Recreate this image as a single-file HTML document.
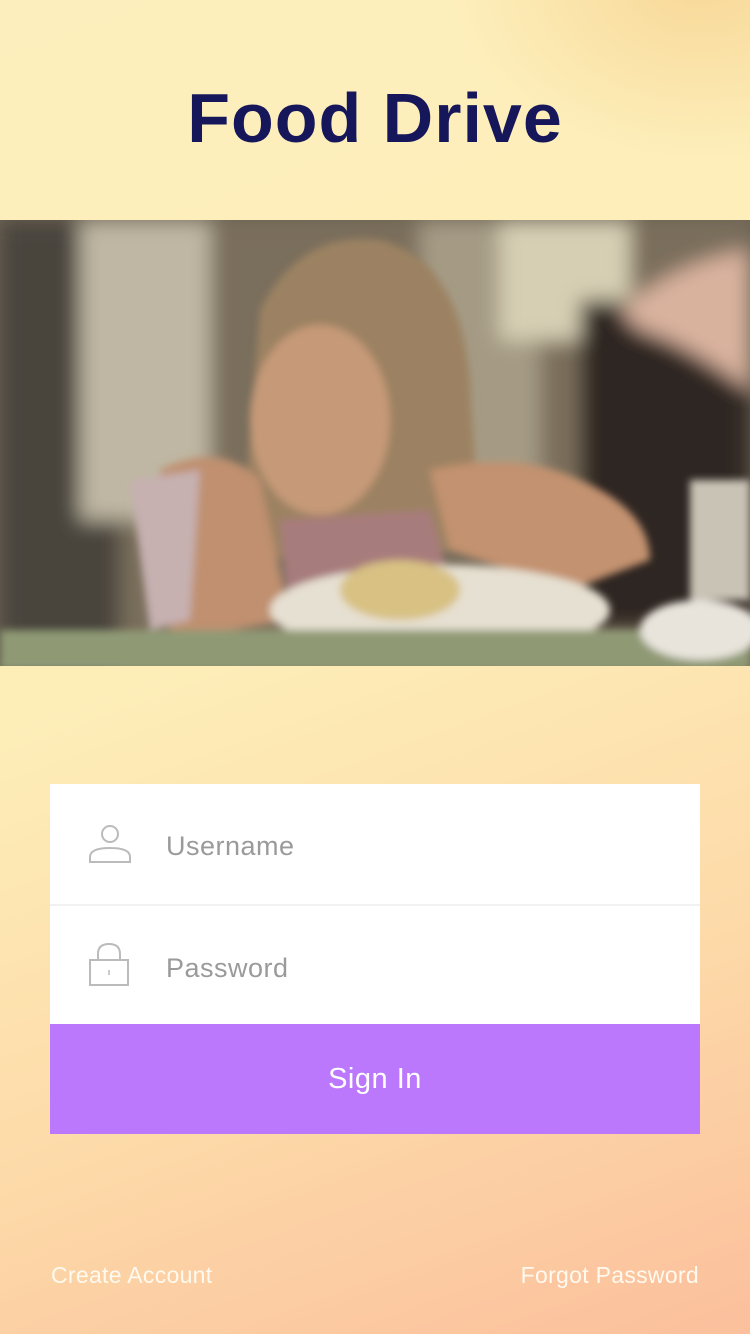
<!DOCTYPE html>
<html><head><meta charset="utf-8"><style>
html,body{margin:0;padding:0}
body{width:750px;height:1334px;position:relative;overflow:hidden;font-family:"Liberation Sans",sans-serif;
background:linear-gradient(160deg,#fdefbd 0%,#fdeeb8 45%,#fdd9a8 75%,#fbbf9c 100%);}
.glow{position:absolute;right:-200px;top:-200px;width:500px;height:360px;border-radius:50%;background:radial-gradient(closest-side,rgba(246,208,140,.75),rgba(246,208,140,0));}
h1{position:absolute;top:78px;left:0;width:750px;margin:0;text-align:center;font-size:70px;font-weight:bold;color:#15175a;letter-spacing:1px}
.photo{position:absolute;left:0;top:220px;width:750px;height:446px;overflow:hidden;background:#6e6455}
.panel{position:absolute;left:50px;top:784px;width:650px;height:240px;background:#fff}
.row{height:120px;position:relative}
.row+.row{border-top:2px solid #f1f1f1;height:118px}
.row span{position:absolute;left:116px;top:47px;font-size:27px;color:#9a9a9a;letter-spacing:.5px}
.row svg{position:absolute;left:38px}
.btn{position:absolute;left:50px;top:1024px;width:650px;height:110px;background:#bb78fd;color:#fff;font-size:29px;text-align:center;line-height:110px;letter-spacing:.5px}
.l{position:absolute;top:1262px;font-size:23px;color:#fffaf0;letter-spacing:.3px}
</style></head><body>
<div class="glow"></div>
<h1>Food Drive</h1>
<div class="photo">
<svg width="750" height="446" viewBox="0 0 750 446">
<defs><filter id="b"><feGaussianBlur stdDeviation="10"/></filter><filter id="s"><feGaussianBlur stdDeviation="4"/></filter></defs>
<g filter="url(#b)">
<rect width="750" height="446" fill="#7a6e5c"/>
<rect x="0" y="0" width="120" height="446" fill="#4a443c"/>
<rect x="80" y="0" width="130" height="300" fill="#bfb7a3"/>
<rect x="420" y="0" width="120" height="260" fill="#a59b85"/>
<rect x="500" y="0" width="130" height="120" fill="#d7cfb4"/>
<rect x="580" y="80" width="170" height="330" fill="#2e2822"/>
<path d="M620 90 Q680 40 750 30 L750 170 Q680 120 640 110Z" fill="#d9b29e"/>
</g>
<g filter="url(#s)">
<path d="M260 90 Q300 10 380 20 Q460 40 470 160 L480 330 L240 340 Z" fill="#9c8262"/>
<ellipse cx="320" cy="200" rx="70" ry="95" fill="#c69a78"/>
<path d="M160 250 Q220 220 260 260 L290 400 L170 420 Z" fill="#c09070"/>
<path d="M130 260 L200 250 L190 400 L150 410Z" fill="#c6b0b0"/>
<path d="M280 300 L430 290 L460 400 L290 410Z" fill="#a77b7c"/>
<path d="M430 250 Q520 230 580 260 Q650 290 650 340 L570 370 L450 330Z" fill="#c3926f"/>
<rect x="690" y="260" width="60" height="120" fill="#c9c3b5"/>
<ellipse cx="440" cy="390" rx="170" ry="45" fill="#e6e0d2"/>
<ellipse cx="400" cy="370" rx="60" ry="30" fill="#d8c183"/>
<rect x="0" y="410" width="750" height="40" fill="#8f9a75"/>
<ellipse cx="700" cy="410" rx="60" ry="30" fill="#e8e4dc"/>
</g>
</svg>
</div>
<div class="panel">
<div class="row">
<svg style="top:40px" width="44" height="40" viewBox="0 0 44 40"><circle cx="22" cy="10" r="8" fill="none" stroke="#bbb" stroke-width="2"/><path d="M2 38 L2 33 Q2 24 22 24 Q42 24 42 33 L42 38 Z" fill="none" stroke="#bbb" stroke-width="2"/></svg>
<span>Username</span></div>
<div class="row">
<svg style="top:36px" width="42" height="46" viewBox="0 0 42 46"><path d="M10 18 V12 Q10 2 21 2 Q32 2 32 12 V18" fill="none" stroke="#bbb" stroke-width="2"/><rect x="2" y="18" width="38" height="25" fill="none" stroke="#bbb" stroke-width="2"/><line x1="21" y1="28" x2="21" y2="33" stroke="#bbb" stroke-width="1.5"/></svg>
<span>Password</span></div>
</div>
<div class="btn">Sign In</div>
<div class="l" style="left:51px">Create Account</div>
<div class="l" style="right:51px">Forgot Password</div>
</body></html>
